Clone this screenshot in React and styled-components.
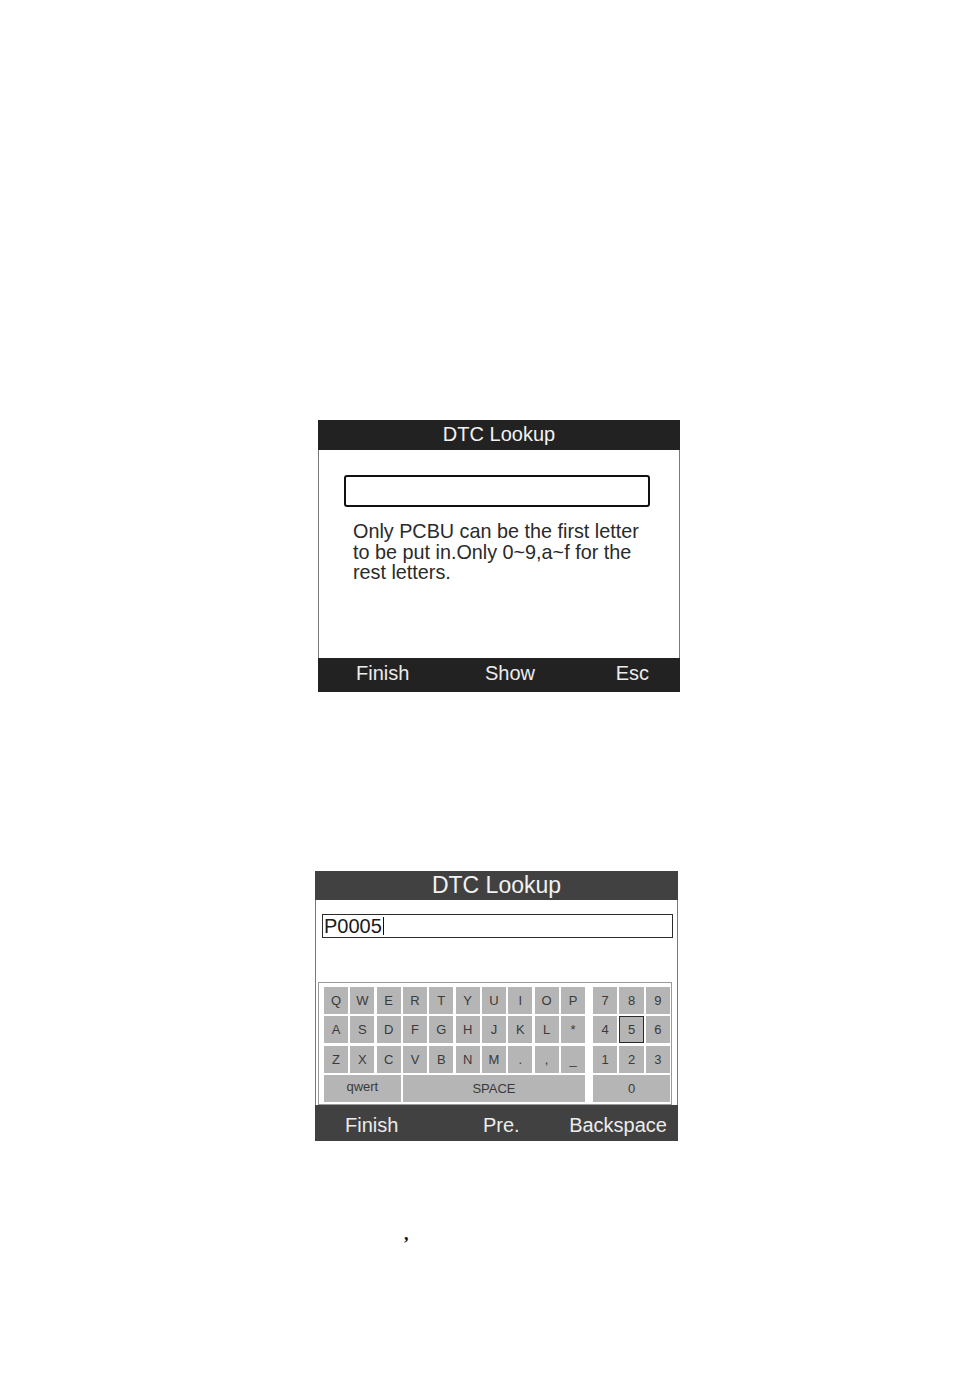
import React from 'react';
import styled, { createGlobalStyle } from 'styled-components';

const GlobalStyle = createGlobalStyle`
  html, body {
    margin: 0;
    padding: 0;
    background: #ffffff;
  }
  body {
    font-family: "Liberation Sans", Arial, sans-serif;
  }
`;

const Page = styled.div`
  width: 954px;
  min-height: 1374px;
  display: flex;
  flex-direction: column;
  padding-top: 420px;
  box-sizing: border-box;
`;

const Screen = styled.div`
  width: ${p => p.$w}px;
  margin-left: ${p => p.$left}px;
  margin-bottom: ${p => p.$after}px;
  display: flex;
  flex-direction: column;
`;

const TitleBar = styled.div`
  height: ${p => p.$h}px;
  box-sizing: border-box;
  background: ${p => p.$bg};
  color: #f2f2f2;
  font-size: ${p => p.$size}px;
  display: flex;
  align-items: center;
  justify-content: center;
  padding-bottom: ${p => p.$lift || 0}px;
`;

const Body = styled.div`
  height: ${p => p.$h}px;
  background: #fff;
  border-left: 1px solid #7a7a7a;
  border-right: 1px solid #7a7a7a;
  display: flex;
  flex-direction: column;
  box-sizing: border-box;
`;

const EmptyInput = styled.div`
  margin: 25px 0 0 25px;
  width: 306px;
  height: 32px;
  box-sizing: border-box;
  border: 2px solid #111;
  border-radius: 3px;
`;

const Hint = styled.p`
  margin: 14px 0 0 34px;
  font-size: 19.8px;
  line-height: 20.5px;
  color: #2a2a2a;
`;

const CodeInput = styled.div`
  margin: 14px 0 0 6px;
  width: 351px;
  height: 24px;
  box-sizing: border-box;
  border: 1px solid #2c2c2c;
  padding-left: 1px;
  font-size: 20px;
  line-height: 22px;
  color: #1a1a1a;
  display: flex;
  align-items: center;
`;

const Caret = styled.span`
  display: inline-block;
  width: 1px;
  height: 18px;
  margin-left: 1px;
  background: #111;
`;

const Keyboard = styled.div`
  margin: 44px 0 0 2px;
  width: 354px;
  height: 123px;
  box-sizing: border-box;
  border: 1px solid #9a9a9a;
  padding: 4px 0 0 5px;
  display: flex;
  gap: 8px;
`;

const KeyGrid = styled.div`
  width: ${p => p.$w}px;
  display: grid;
  grid-template-columns: repeat(${p => p.$cols}, 1fr);
  grid-template-rows: repeat(4, 27px);
  column-gap: 2.4px;
  row-gap: 2.4px;
`;

const Key = styled.div`
  grid-column: span ${p => p.$span || 1};
  background: #b5b5b5;
  color: #3a3a3a;
  font-size: 13px;
  display: flex;
  align-items: center;
  justify-content: center;
  box-sizing: border-box;
  border: ${p => (p.$active ? '1.5px solid #2a2a2a' : 'none')};
  padding-bottom: ${p => p.$raise || 0}px;
`;

const FooterBar = styled.div`
  height: ${p => p.$h}px;
  box-sizing: border-box;
  background: ${p => p.$bg};
  color: #ececec;
  font-size: 20px;
  display: grid;
  grid-template-columns: ${p => p.$first}px auto 1fr;
  align-items: center;
  padding: ${p => p.$top || 0}px ${p => p.$right}px ${p => p.$bottom || 0}px ${p => p.$left}px;
`;

const FooterLabel = styled.span`
  justify-self: ${p => (p.$end ? 'end' : 'start')};
`;

const Caption = styled.p`
  margin: 0;
  padding-left: 404px;
  font-family: "Liberation Serif", "Times New Roman", serif;
  font-weight: bold;
  font-size: 18px;
  line-height: 20px;
  color: #111;
`;

const letters = [
  'Q', 'W', 'E', 'R', 'T', 'Y', 'U', 'I', 'O', 'P',
  'A', 'S', 'D', 'F', 'G', 'H', 'J', 'K', 'L', '*',
  'Z', 'X', 'C', 'V', 'B', 'N', 'M', '.', ',', '_',
];

const numbers = ['7', '8', '9', '4', '5', '6', '1', '2', '3'];

const App = () => {
  return (
    <Page>
      <GlobalStyle />
      <Screen $w={362} $left={318} $after={179}>
        <TitleBar $h={30} $bg="#222222" $size={20} $lift={1}>DTC Lookup</TitleBar>
        <Body $h={208}>
          <EmptyInput />
          <Hint>
            Only PCBU can be the first letter<br />
            to be put in.Only 0~9,a~f for the<br />
            rest letters.
          </Hint>
        </Body>
        <FooterBar $h={34} $bg="#222222" $left={38} $right={31} $first={129} $bottom={4}>
          <FooterLabel>Finish</FooterLabel>
          <FooterLabel>Show</FooterLabel>
          <FooterLabel $end>Esc</FooterLabel>
        </FooterBar>
      </Screen>

      <Screen $w={363} $left={315} $after={83}>
        <TitleBar $h={29} $bg="#414141" $size={23} $lift={1}>DTC Lookup</TitleBar>
        <Body $h={205}>
          <CodeInput>
            P0005<Caret />
          </CodeInput>
          <Keyboard>
            <KeyGrid $w={261} $cols={10}>
              {letters.map((k, i) => (
                <Key key={i}>{k}</Key>
              ))}
              <Key $span={3} $raise={4}>qwert</Key>
              <Key $span={7}>SPACE</Key>
            </KeyGrid>
            <KeyGrid $w={77} $cols={3}>
              {numbers.map(n => (
                <Key key={n} $active={n === '5'}>{n}</Key>
              ))}
              <Key $span={3}>0</Key>
            </KeyGrid>
          </Keyboard>
        </Body>
        <FooterBar $h={36} $bg="#414141" $left={30} $right={11} $first={138} $top={5}>
          <FooterLabel>Finish</FooterLabel>
          <FooterLabel>Pre.</FooterLabel>
          <FooterLabel $end>Backspace</FooterLabel>
        </FooterBar>
      </Screen>

      <Caption>,</Caption>
    </Page>
  );
};

export default App;
